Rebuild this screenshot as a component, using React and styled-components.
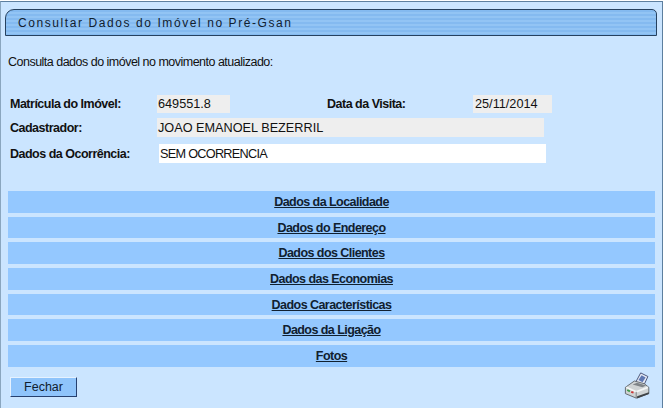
import React from 'react';
import styled, { createGlobalStyle } from 'styled-components';

const GlobalStyle = createGlobalStyle`
  html, body {
    margin: 0;
    padding: 0;
    background: #fff;
  }
  body {
    font-family: "Liberation Sans", Arial, sans-serif;
    color: #111;
  }
`;

const Panel = styled.div`
  box-sizing: border-box;
  width: 663px;
  height: 407px;
  margin-top: 1px;
  padding: 7px 5px 0 4px;
  background: #cbe5ff;
  border-top: 1px solid #5d7f9f;
  border-left: 1px solid #8aa6bf;
  border-right: 1px solid #5d7f9f;
`;

const Header = styled.div`
  box-sizing: border-box;
  width: 652px;
  height: 27px;
  padding-left: 12px;
  display: flex;
  align-items: center;
  background: repeating-linear-gradient(180deg, #84baf0 0, #84baf0 2px, #92c4f4 2px, #92c4f4 4px);
  border: 1px solid #26415f;
  border-radius: 9px 5px 0 0;
  font-size: 12px;
  letter-spacing: 1.58px;
  color: #10202f;
`;

const Intro = styled.p`
  margin: 19px 0 0 3px;
  height: 14px;
  font-size: 12.5px;
  line-height: 14px;
  letter-spacing: -0.51px;
`;

const Form = styled.div`
  margin: 26px 0 0 1px;
  display: flex;
  flex-direction: column;
  height: 69px;
`;

const FormRow = styled.div`
  display: flex;
  align-items: center;
  height: ${p => p.$height}px;
  margin-top: ${p => p.$top || 0}px;
`;

const Label = styled.span`
  width: ${p => p.$width}px;
  padding-left: ${p => p.$indent || 0}px;
  box-sizing: border-box;
  flex: none;
  font-size: 12.5px;
  font-weight: bold;
  letter-spacing: -0.5px;
`;

const Field = styled.span`
  box-sizing: border-box;
  display: flex;
  align-items: center;
  flex: none;
  width: ${p => p.$width}px;
  height: 100%;
  padding-left: ${p => p.$pad || 1}px;
  background: ${p => (p.$white ? '#fff' : '#eeeeee')};
  font-size: 12.7px;
  letter-spacing: ${p => p.$tight || 0}px;
`;

const Sections = styled.div`
  margin: 27px 0 0 3px;
  width: 647px;
  display: flex;
  flex-direction: column;
  gap: 4px;
`;

const SectionLink = styled.a`
  display: flex;
  align-items: center;
  justify-content: center;
  height: 21.7px;
  background: #94c8ff;
  color: #10202f;
  font-size: 12.5px;
  font-weight: bold;
  letter-spacing: -0.55px;
  text-decoration: underline;
`;

const Footer = styled.div`
  margin: 10px 0 0 5px;
  width: 642px;
  display: flex;
  align-items: flex-start;
  justify-content: space-between;
`;

const CloseButton = styled.button`
  box-sizing: border-box;
  width: 67px;
  height: 20px;
  padding: 0;
  background: #8fc4fb;
  border: 1px solid;
  border-color: #e6f2ff #26406f #26406f #e6f2ff;
  font-family: inherit;
  font-size: 12.5px;
  color: #10202f;
`;

const PrintIcon = styled.svg`
  display: block;
  margin-top: -5px;
`;

const sections = [
  'Dados da Localidade',
  'Dados do Endereço',
  'Dados dos Clientes',
  'Dados das Economias',
  'Dados Características',
  'Dados da Ligação',
  'Fotos',
];

function Printer() {
  return (
    <PrintIcon width="28" height="27" viewBox="0 0 30 30">
      <path d="M11 14 L18 1 L26 5 L20 18 Z" fill="#e4e9f5" stroke="#3f4a6e" strokeWidth="1" />
      <path d="M15.5 9 L19 3.5 L23.5 6 L20 11.5 Z" fill="#5f78b2" />
      <path d="M1 17 L11 10 L22 13 L27 17 L27 24 L13 29 L1 24 Z" fill="#cfd3d4" stroke="#5b6166" strokeWidth="1" />
      <path d="M2 17 L13 22 L26 17" fill="none" stroke="#f4f6f6" strokeWidth="2" />
      <path d="M13 22 L13 29" stroke="#74797d" strokeWidth="1" />
      <path d="M3 20 L6 21.5" stroke="#3d9a4a" strokeWidth="2" />
      <path d="M7.5 22 L10 23" stroke="#c33" strokeWidth="2" />
      <path d="M14 27 L27 22.5 L27 24.5 L14 29.5 Z" fill="#3f4347" />
      <path d="M9 14 L20 17 L24 15 L14 12 Z" fill="#7f8488" />
    </PrintIcon>
  );
}

export default function App() {
  return (
    <>
      <GlobalStyle />
      <Panel>
        <Header>Consultar Dados do Imóvel no Pré-Gsan</Header>
        <Intro>Consulta dados do imóvel no movimento atualizado:</Intro>
        <Form>
          <FormRow $height={18}>
            <Label $width={151} $indent={4}>Matrícula do Imóvel:</Label>
            <Field $width={73}>649551.8</Field>
            <Label $width={243} $indent={97}>Data da Visita:</Label>
            <Field $width={79} $pad={2}>25/11/2014</Field>
          </FormRow>
          <FormRow $height={19} $top={5}>
            <Label $width={151} $indent={4}>Cadastrador:</Label>
            <Field $width={387}>JOAO EMANOEL BEZERRIL</Field>
          </FormRow>
          <FormRow $height={19} $top={7}>
            <Label $width={153} $indent={4}>Dados da Ocorrência:</Label>
            <Field $width={387} $white $tight={-0.72}>SEM OCORRENCIA</Field>
          </FormRow>
        </Form>
        <Sections>
          {sections.map(name => (
            <SectionLink key={name} href="#">{name}</SectionLink>
          ))}
        </Sections>
        <Footer>
          <CloseButton>Fechar</CloseButton>
          <Printer />
        </Footer>
      </Panel>
    </>
  );
}
